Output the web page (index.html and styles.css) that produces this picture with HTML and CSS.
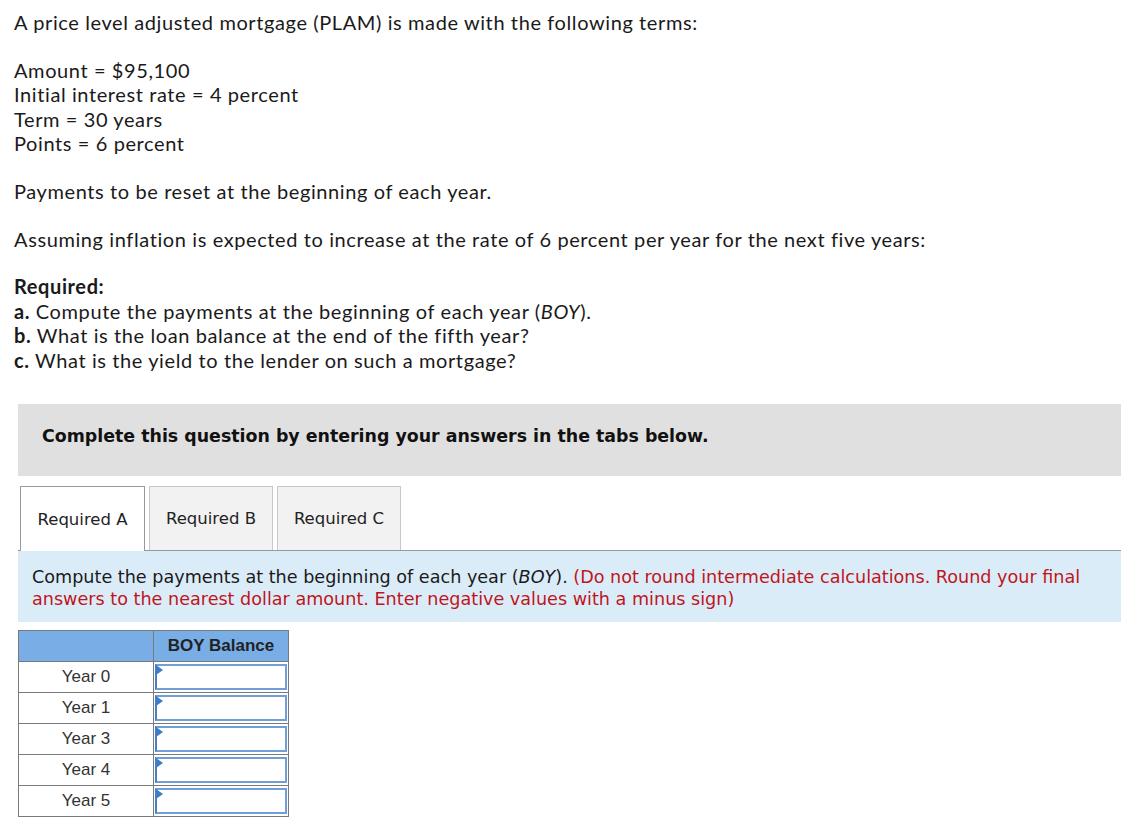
FILE: index.html
```html
<!DOCTYPE html>
<html>
<head>
<meta charset="utf-8">
<link rel="stylesheet" href="styles.css">
</head>
<body>
<div class="question">
  <p>A price level adjusted mortgage (PLAM) is made with the following terms:</p>
  <p>Amount = $95,100<br>Initial interest rate = 4 percent<br>Term = 30 years<br>Points = 6 percent</p>
  <p>Payments to be reset at the beginning of each year.</p>
  <p>Assuming inflation is expected to increase at the rate of 6 percent per year for the next five years:</p>
  <p><b>Required:</b><br><b>a.</b> Compute the payments at the beginning of each year (<i>BOY</i>).<br><b>b.</b> What is the loan balance at the end of the fifth year?<br><b>c.</b> What is the yield to the lender on such a mortgage?</p>
</div>
<div class="panel">
  <div class="banner">Complete this question by entering your answers in the tabs below.</div>
  <div class="tabs">
    <div class="tab active">Required A</div>
    <div class="tab">Required B</div>
    <div class="tab">Required C</div>
  </div>
  <div class="instructions">Compute the payments at the beginning of each year (<i>BOY</i>). <span class="warn">(Do not round intermediate calculations. Round your final answers to the nearest dollar amount. Enter negative values with a minus sign)</span></div>
  <table class="grid">
    <tr class="head"><th></th><th>BOY Balance</th></tr>
    <tr><td class="label">Year 0</td><td class="cell"><div class="input"></div></td></tr>
    <tr><td class="label">Year 1</td><td class="cell"><div class="input"></div></td></tr>
    <tr><td class="label">Year 3</td><td class="cell"><div class="input"></div></td></tr>
    <tr><td class="label">Year 4</td><td class="cell"><div class="input"></div></td></tr>
    <tr><td class="label">Year 5</td><td class="cell"><div class="input"></div></td></tr>
  </table>
</div>
</body>
</html>
```
FILE: styles.css
```css
html, body {
  margin: 0;
  padding: 0;
  background: #fff;
}
body {
  color: #1a1a1a;
}
.question {
  padding: 10px 14px 0 14px;
  font-family: Lato, "Liberation Sans", sans-serif;
  font-size: 20px;
  letter-spacing: 0.6px;
  line-height: 24.4px;
}
.question p {
  margin: 0 0 23.4px 0;
}
.question b {
  font-weight: 700;
}
.panel {
  padding: 9px 0 0 18px;
}
.banner {
  background: #e0e0e0;
  height: 72px;
  box-sizing: border-box;
  display: flex;
  align-items: center;
  padding: 0 0 9px 24px;
  font-family: "DejaVu Sans", Verdana, sans-serif;
  font-weight: bold;
  font-size: 17.4px;
  color: #111;
}
.tabs {
  display: flex;
  gap: 4px;
  margin-top: 10px;
  padding-left: 2px;
  border-bottom: 1px solid #999;
}
.tab {
  height: 64px;
  box-sizing: border-box;
  width: 124px;
  display: flex;
  align-items: center;
  justify-content: center;
  font-family: "DejaVu Sans", Verdana, sans-serif;
  font-size: 16.5px;
  color: #222;
  background: #f2f2f2;
  border: 1px solid #c8c8c8;
  border-bottom: none;
}
.tab.active {
  width: 125px;
  background: #fff;
  border-color: #999;
  margin-bottom: -1px;
  height: 65px;
}
.instructions {
  background: #dbecf9;
  padding: 15px 14px 12px 14px;
  font-family: "DejaVu Sans", Verdana, sans-serif;
  font-size: 17.6px;
  line-height: 22px;
  color: #1a1a1a;
}
.warn {
  color: #c0151b;
}
.grid {
  margin-top: 8px;
  border-collapse: collapse;
  font-family: "Liberation Sans", Arial, sans-serif;
  font-size: 17px;
  color: #333;
}
.grid td, .grid th {
  border: 1px solid #7a7a7a;
  padding: 0;
  height: 30px;
}
.grid tr.head th {
  background: #79ade6;
  font-weight: bold;
  color: #222;
  height: 30px;
}
.grid th, .grid td {
  width: 134px;
}
.label {
  text-align: center;
}
.cell {
  position: relative;
}
.input {
  height: 26px;
  margin: 1px;
  box-sizing: border-box;
  border: 2px solid #6f9ed8;
  border-left-color: #4a7fc4;
  background: #fff;
  position: relative;
}
.input::before {
  content: "";
  position: absolute;
  top: -1px;
  left: -1px;
  border-top: 5px solid transparent;
  border-bottom: 5px solid transparent;
  border-left: 7px solid #3d7cc9;
}
```
